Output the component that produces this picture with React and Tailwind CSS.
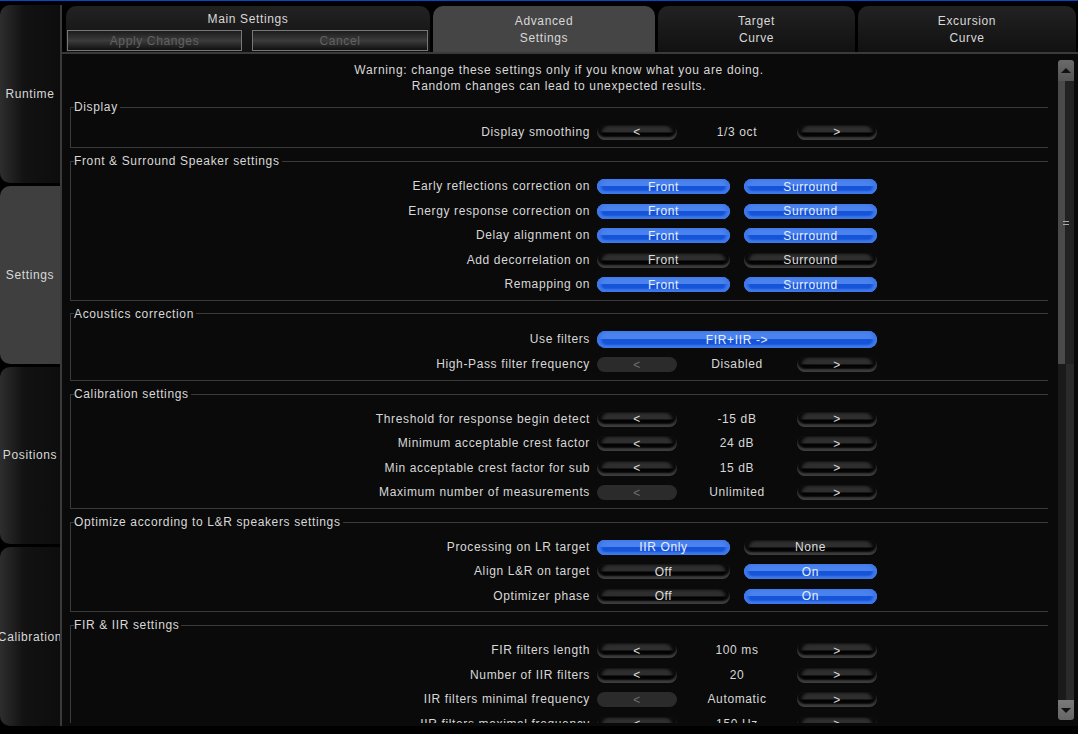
const sideTabs = [
  { label: "Runtime", h: "h-[178px]" },
  { label: "Settings", h: "h-[178px]", active: true },
  { label: "Positions", h: "h-[178px]" },
  { label: "Calibration", h: "h-[179px]" },
];

const sections = [
  {
    title: "Display",
    rows: [{ label: "Display smoothing", value: "1/3 oct" }],
  },
  {
    title: "Front & Surround Speaker settings",
    rows: [
      { label: "Early reflections correction on", pair: [["Front", true], ["Surround", true]] },
      { label: "Energy response correction on", pair: [["Front", true], ["Surround", true]] },
      { label: "Delay alignment on", pair: [["Front", true], ["Surround", true]] },
      { label: "Add decorrelation on", pair: [["Front", false], ["Surround", false]] },
      { label: "Remapping on", pair: [["Front", true], ["Surround", true]] },
    ],
  },
  {
    title: "Acoustics correction",
    rows: [
      { label: "Use filters", wide: "FIR+IIR ->" },
      { label: "High-Pass filter frequency", value: "Disabled", leftOff: true },
    ],
  },
  {
    title: "Calibration settings",
    rows: [
      { label: "Threshold for response begin detect", value: "-15 dB" },
      { label: "Minimum acceptable crest factor", value: "24 dB" },
      { label: "Min acceptable crest factor for sub", value: "15 dB" },
      { label: "Maximum number of measurements", value: "Unlimited", leftOff: true },
    ],
  },
  {
    title: "Optimize according to L&R speakers settings",
    rows: [
      { label: "Processing on LR target", pair: [["IIR Only", true], ["None", false]] },
      { label: "Align L&R on target", pair: [["Off", false], ["On", true]] },
      { label: "Optimizer phase", pair: [["Off", false], ["On", true]] },
    ],
  },
  {
    title: "FIR & IIR settings",
    rows: [
      { label: "FIR filters length", value: "100 ms" },
      { label: "Number of IIR filters", value: "20" },
      { label: "IIR filters minimal frequency", value: "Automatic", leftOff: true },
      { label: "IIR filters maximal frequency", value: "150 Hz" },
    ],
  },
];

function Pill({ children, on, off, className }) {
  if (off) {
    return (
      <div className={`mt-[1px] rounded-full bg-[#2b2b2b] text-[#6f6f6f] flex items-center justify-center ${className}`}>
        {children}
      </div>
    );
  }
  if (on) {
    return (
      <div className={`mt-[1px] rounded-full text-[#e8eefc] flex items-center justify-center bg-gradient-to-b from-[#4a82ee] from-45% to-[#1553d8] to-50% shadow-[inset_0_-3px_2px_#3f78e8,inset_4px_0_3px_#3f78e8,inset_-4px_0_3px_#3f78e8] ${className}`}>
        {children}
      </div>
    );
  }
  return (
    <div className={`mt-[1px] rounded-full text-[#dddddd] flex items-center justify-center bg-gradient-to-b from-[#2e2e2e] from-45% to-[#030303] to-55% shadow-[inset_0_-3px_2px_#3d3d3d,inset_5px_0_3px_#0a0a0a,inset_-5px_0_3px_#0a0a0a] ${className}`}>
      {children}
    </div>
  );
}

function Row({ row }) {
  return (
    <div className={`flex items-center ${row.wide ? "h-[26px]" : "h-[24.5px]"}`}>
      <div className="w-[519px] text-right text-[#d8d8d8] whitespace-nowrap">{row.label}</div>
      <div className="ml-[7px] flex items-center">
        {row.wide && (
          <Pill on className="w-[280px] h-[17px]">
            {row.wide}
          </Pill>
        )}
        {row.pair && (
          <div className="flex gap-[14px]">
            {row.pair.map(([text, on], i) => (
              <Pill key={i} on={on} className="w-[133px] h-[15px]">
                {text}
              </Pill>
            ))}
          </div>
        )}
        {row.value && (
          <>
            <Pill off={row.leftOff} className="w-[80px] h-[15px]">
              &lt;
            </Pill>
            <div className="w-[120px] text-center text-[#d8d8d8]">{row.value}</div>
            <Pill className="w-[80px] h-[15px]">&gt;</Pill>
          </>
        )}
      </div>
    </div>
  );
}

function Section({ section }) {
  return (
    <fieldset className="border border-[#3a3a3a] mb-[5.9px] pl-0 pb-[3.6px] pt-[5.4px] w-[979px]">
      <legend className="ml-[3px] pr-[2px] leading-[14px] text-[#d8d8d8]">{section.title}</legend>
      {section.rows.map((row) => (
        <Row key={row.label} row={row} />
      ))}
    </fieldset>
  );
}

function ScrollBar() {
  return (
    <div className="w-[16px] ml-[10px] mr-[4px] my-[6px] flex flex-col">
      <div className="h-[21px] rounded-t-[3px] bg-gradient-to-b from-[#6a6a6a] to-[#555555] flex items-center justify-center">
        <div className="w-0 h-0 border-x-[5px] border-x-transparent border-b-[5px] border-b-[#111111]" />
      </div>
      <div className="h-[283px] bg-gradient-to-r from-[#4a4a4a] from-45% to-[#222222] to-45% flex items-center justify-center">
        <div className="w-[6px] h-[4px] border-y border-[#aaaaaa]" />
      </div>
      <div className="flex-1 bg-gradient-to-r from-[#1a1a1a] from-50% to-[#2a2a2a] to-50%" />
      <div className="h-[20px] rounded-b-[3px] bg-gradient-to-b from-[#7a7a7a] to-[#666666] flex items-center justify-center">
        <div className="w-0 h-0 border-x-[5px] border-x-transparent border-t-[5px] border-t-[#111111]" />
      </div>
    </div>
  );
}

export default function App() {
  return (
    <div className="w-[1078px] h-[734px] overflow-hidden bg-black border-t border-[#0b46c8] text-[12px] tracking-[0.63px] leading-none font-['Liberation_Sans',Arial,sans-serif]">
      <div className="flex h-[725px] pt-[4px]">
        <div className="w-[60px] flex flex-col gap-[3px] shrink-0">
          {sideTabs.map((t) => (
            <div
              key={t.label}
              className={`${t.h} rounded-l-[10px] flex items-center justify-center text-[#d8d8d8] whitespace-nowrap ${
                t.active
                  ? "bg-[#3f3f3f]"
                  : "bg-gradient-to-r from-[#2e2e2e] via-[#121212] via-40% to-[#0d0d0d]"
              }`}
            >
              {t.label}
            </div>
          ))}
        </div>
        <div className="w-[2px] bg-[#3a3a3a] shrink-0" />
        <div className="flex-1 flex flex-col min-w-0 bg-[#0a0a0a]">
          <div className="h-[49px] pt-[1px] bg-black flex gap-[3px] pl-[4px] border-b-2 border-[#3a3a3a] text-[#d8d8d8]">
            <div className="w-[364px] rounded-t-[10px] bg-gradient-to-b from-[#222222] to-[#111111] flex flex-col">
              <div className="h-[24px] pt-[2px] flex items-center justify-center">Main Settings</div>
              <div className="flex pl-[1px] gap-[10px]">
                <div className="w-[175px] h-[21px] border border-[#777777] bg-gradient-to-b from-[#1c1c1c] via-[#3c3c3c] to-[#111111] flex items-center justify-center text-[#626262]">
                  Apply Changes
                </div>
                <div className="w-[176px] h-[21px] border border-[#777777] bg-gradient-to-b from-[#1c1c1c] via-[#3c3c3c] to-[#111111] flex items-center justify-center text-[#626262]">
                  Cancel
                </div>
              </div>
            </div>
            <div className="w-[222px] rounded-t-[10px] bg-[#454545] flex flex-col items-center justify-center gap-[5px]">
              <div>Advanced</div>
              <div>Settings</div>
            </div>
            <div className="w-[197px] rounded-t-[10px] bg-gradient-to-b from-[#222222] to-[#111111] flex flex-col items-center justify-center gap-[5px]">
              <div>Target</div>
              <div>Curve</div>
            </div>
            <div className="w-[218px] rounded-t-[10px] bg-gradient-to-b from-[#222222] to-[#111111] flex flex-col items-center justify-center gap-[5px]">
              <div>Excursion</div>
              <div>Curve</div>
            </div>
          </div>
          <div className="flex-1 flex min-h-0">
            <div className="flex-1 min-w-0 h-[669px] overflow-hidden pl-[8px]">
              <div className="h-[46px] pt-[8px] text-center text-[#d8d8d8] leading-[16px] tracking-[0.67px]">
                <div>Warning: change these settings only if you know what you are doing.</div>
                <div>Random changes can lead to unexpected results.</div>
              </div>
              {sections.map((s) => (
                <Section key={s.title} section={s} />
              ))}
            </div>
            <ScrollBar />
          </div>
        </div>
      </div>
    </div>
  );
}
